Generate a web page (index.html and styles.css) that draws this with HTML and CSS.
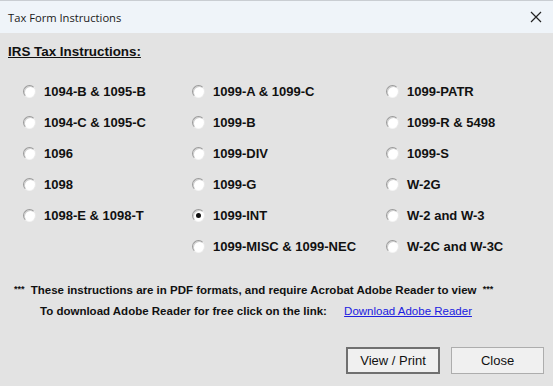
FILE: index.html
```html
<!DOCTYPE html>
<html lang="en">
<head>
	<meta charset="utf-8">
	<title>Tax Form Instructions</title>
	<link rel="stylesheet" href="styles.css">
</head>
<body>
	<div class="window">
		<div class="titlebar">
			<span class="title">Tax Form Instructions</span>
			<svg class="close-x" width="12" height="12" viewBox="0 0 12 12"><path d="M1 1 L11 11 M11 1 L1 11" stroke="#222" stroke-width="1.2" fill="none"/></svg>
		</div>

		<div class="content">
			<h1 class="heading">IRS Tax Instructions:</h1>

			<div class="forms">
				<label class="opt"><span class="radio"></span>1094-B &amp; 1095-B</label>
				<label class="opt"><span class="radio"></span>1099-A &amp; 1099-C</label>
				<label class="opt"><span class="radio"></span>1099-PATR</label>

				<label class="opt"><span class="radio"></span>1094-C &amp; 1095-C</label>
				<label class="opt"><span class="radio"></span>1099-B</label>
				<label class="opt"><span class="radio"></span>1099-R &amp; 5498</label>

				<label class="opt"><span class="radio"></span>1096</label>
				<label class="opt"><span class="radio"></span>1099-DIV</label>
				<label class="opt"><span class="radio"></span>1099-S</label>

				<label class="opt"><span class="radio"></span>1098</label>
				<label class="opt"><span class="radio"></span>1099-G</label>
				<label class="opt"><span class="radio"></span>W-2G</label>

				<label class="opt"><span class="radio"></span>1098-E &amp; 1098-T</label>
				<label class="opt"><span class="radio checked"></span>1099-INT</label>
				<label class="opt"><span class="radio"></span>W-2 and W-3</label>

				<span></span>
				<label class="opt"><span class="radio"></span>1099-MISC &amp; 1099-NEC</label>
				<label class="opt"><span class="radio"></span>W-2C and W-3C</label>
			</div>

			<div class="notes">
				<p class="note"><span class="stars">***</span> These instructions are in PDF formats, and require Acrobat Adobe Reader to view <span class="stars">***</span></p>
				<p class="note download">To download Adobe Reader for free click on the link: <a href="#">Download Adobe Reader</a></p>
			</div>

			<div class="buttons">
				<button class="btn default">View / Print</button>
				<button class="btn">Close</button>
			</div>
		</div>
	</div>
</body>
</html>
```

FILE: styles.css
```css
body {
	margin: 0;
	padding: 0;
	background-color: #e3e3e3;
	font-family: 'Liberation Sans', Arial, sans-serif;
}

.window {
	width: 553px;
	height: 386px;
	background-color: #e3e3e3;
	display: flex;
	flex-direction: column;
}

.titlebar {
	height: 33px;
	background-color: #eff4f9;
	border-top: 1px solid #c9cdd2;
	box-sizing: border-box;
	display: flex;
	align-items: center;
	justify-content: space-between;
	padding: 0 11px 0 8px;
}

.title {
	font-family: 'Open Sans', 'Noto Sans', sans-serif;
	font-size: 11.2px;
	color: #1a1a1a;
}

.content {
	padding: 10px 0 0 0;
}

.heading {
	margin: 0 0 0 8px;
	font-size: 13.4px;
	font-weight: bold;
	text-decoration: underline;
	color: #111;
	line-height: 17px;
}

.forms {
	display: grid;
	grid-template-columns: 169px 194px auto;
	grid-auto-rows: 31px;
	margin-top: 16px;
	padding-left: 23px;
}

.opt {
	display: flex;
	align-items: center;
	font-size: 13px;
	font-weight: bold;
	color: #111;
}

.radio {
	width: 11px;
	height: 11px;
	border-radius: 50%;
	margin-right: 8px;
	background: #fff;
	border: 1px solid;
	border-color: #9a9a9a #e8e8e8 #f4f4f4 #9a9a9a;
	box-shadow: inset 1px 1px 0 #cfcfcf;
	position: relative;
}

.radio.checked::after {
	content: "";
	position: absolute;
	left: 3px;
	top: 3px;
	width: 5px;
	height: 5px;
	border-radius: 50%;
	background: #111;
}

.notes {
	margin-top: 17px;
}

.note {
	margin: 0;
	font-size: 11.5px;
	font-weight: bold;
	color: #111;
	line-height: 21px;
}

.note:first-child {
	padding-left: 14px;
}

.stars {
	font-size: 9px;
	vertical-align: 2px;
	margin-right: 3px;
}

.note .stars:last-child {
	margin: 0 0 0 3px;
}

.download {
	padding-left: 40px;
}

.download a {
	margin-left: 14px;
	font-weight: normal;
	color: #2020e0;
}

.buttons {
	display: flex;
	justify-content: flex-end;
	gap: 11px;
	margin-top: 25px;
	padding-right: 9px;
}

.btn {
	width: 93px;
	height: 27px;
	font-family: 'Liberation Sans', Arial, sans-serif;
	font-size: 13px;
	color: #111;
	background: #f0f0f0;
	border: 1px solid #adadad;
	padding: 0;
}

.btn.default {
	width: 94px;
	border: 2px solid #707070;
}
```
